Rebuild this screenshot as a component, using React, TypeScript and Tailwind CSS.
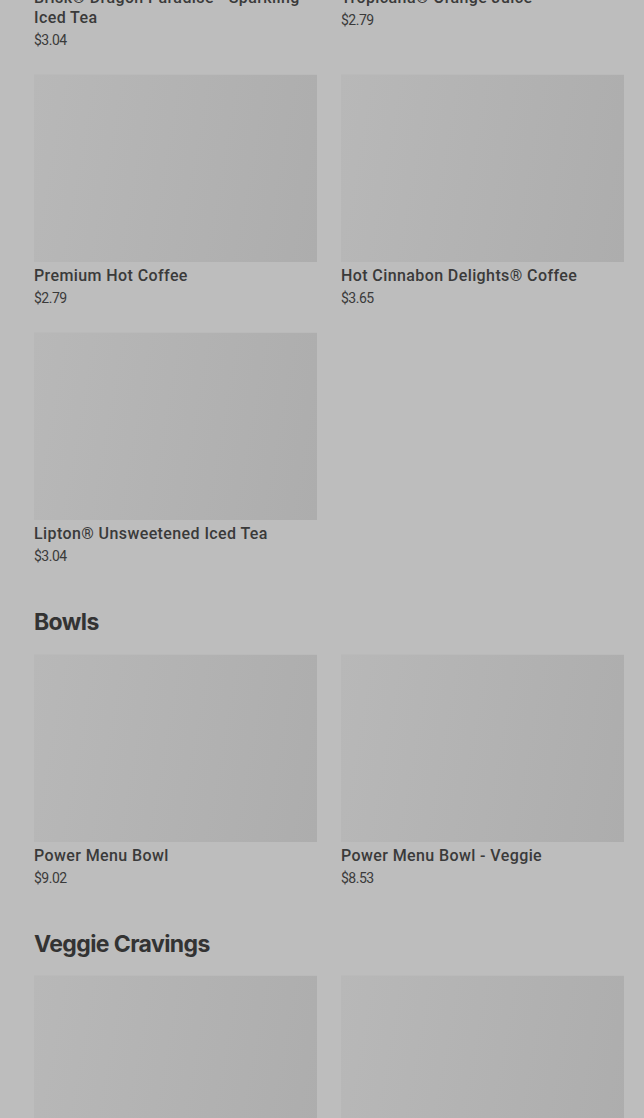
import React from "react";

type Item = { name: string; price: string };

const Card = ({ item }: { item: Item }) => (
  <div className="flex flex-col">
    <div className="h-[188px] w-full border-t-[1px] border-[#bababa] bg-[linear-gradient(100deg,#b8b8b8_0%,#b3b3b3_45%,#adadad_100%)]" />
    <div className="mt-[4px] text-[16px] leading-[20px] font-medium text-[#3a3a3a] tracking-[0.4px] [font-family:Roboto,'Noto_Sans',sans-serif]">
      {item.name}
    </div>
    <div className="mt-[4px] text-[14px] leading-[16px] text-[#3a3a3a] tracking-[-0.5px] [font-family:Roboto,sans-serif]">
      {item.price}
    </div>
  </div>
);

const Heading = ({ children }: { children: React.ReactNode }) => (
  <h2 className="pl-[34px] text-[23px] leading-[28px] font-bold text-[#333333] tracking-[-0.6px] [font-family:Inter,'Liberation_Sans',sans-serif]">
    {children}
  </h2>
);

export default function App() {
  return (
    <div className="min-h-[1118px] w-[644px] overflow-hidden bg-[#bdbdbd]">
      <div className="mt-[-204px]">
        <div className="grid grid-cols-2 gap-x-[24px] gap-y-[24px] pl-[34px] pr-[20px]">
          <Card item={{ name: "Brisk® Dragon Paradise™ Sparkling Iced Tea", price: "$3.04" }} />
          <Card item={{ name: "Tropicana® Orange Juice", price: "$2.79" }} />
          <div className="mt-[2px]">
            <Card item={{ name: "Premium Hot Coffee", price: "$2.79" }} />
          </div>
          <div className="mt-[2px]">
            <Card item={{ name: "Hot Cinnabon Delights® Coffee", price: "$3.65" }} />
          </div>
          <div className="mt-[2px]">
            <Card item={{ name: "Lipton® Unsweetened Iced Tea", price: "$3.04" }} />
          </div>
        </div>
        <div className="mt-[44px]">
          <Heading>Bowls</Heading>
        </div>
        <div className="mt-[18px] grid grid-cols-2 gap-x-[24px] pl-[34px] pr-[20px]">
          <Card item={{ name: "Power Menu Bowl", price: "$9.02" }} />
          <Card item={{ name: "Power Menu Bowl - Veggie", price: "$8.53" }} />
        </div>
        <div className="mt-[44px]">
          <Heading>Veggie Cravings</Heading>
        </div>
        <div className="mt-[17px] grid grid-cols-2 gap-x-[24px] pl-[34px] pr-[20px]">
          <Card item={{ name: "Black Beans Chalupa Supreme", price: "$5.09" }} />
          <Card item={{ name: "Black Bean Crunchwrap Supreme®", price: "$6.04" }} />
        </div>
      </div>
    </div>
  );
}
